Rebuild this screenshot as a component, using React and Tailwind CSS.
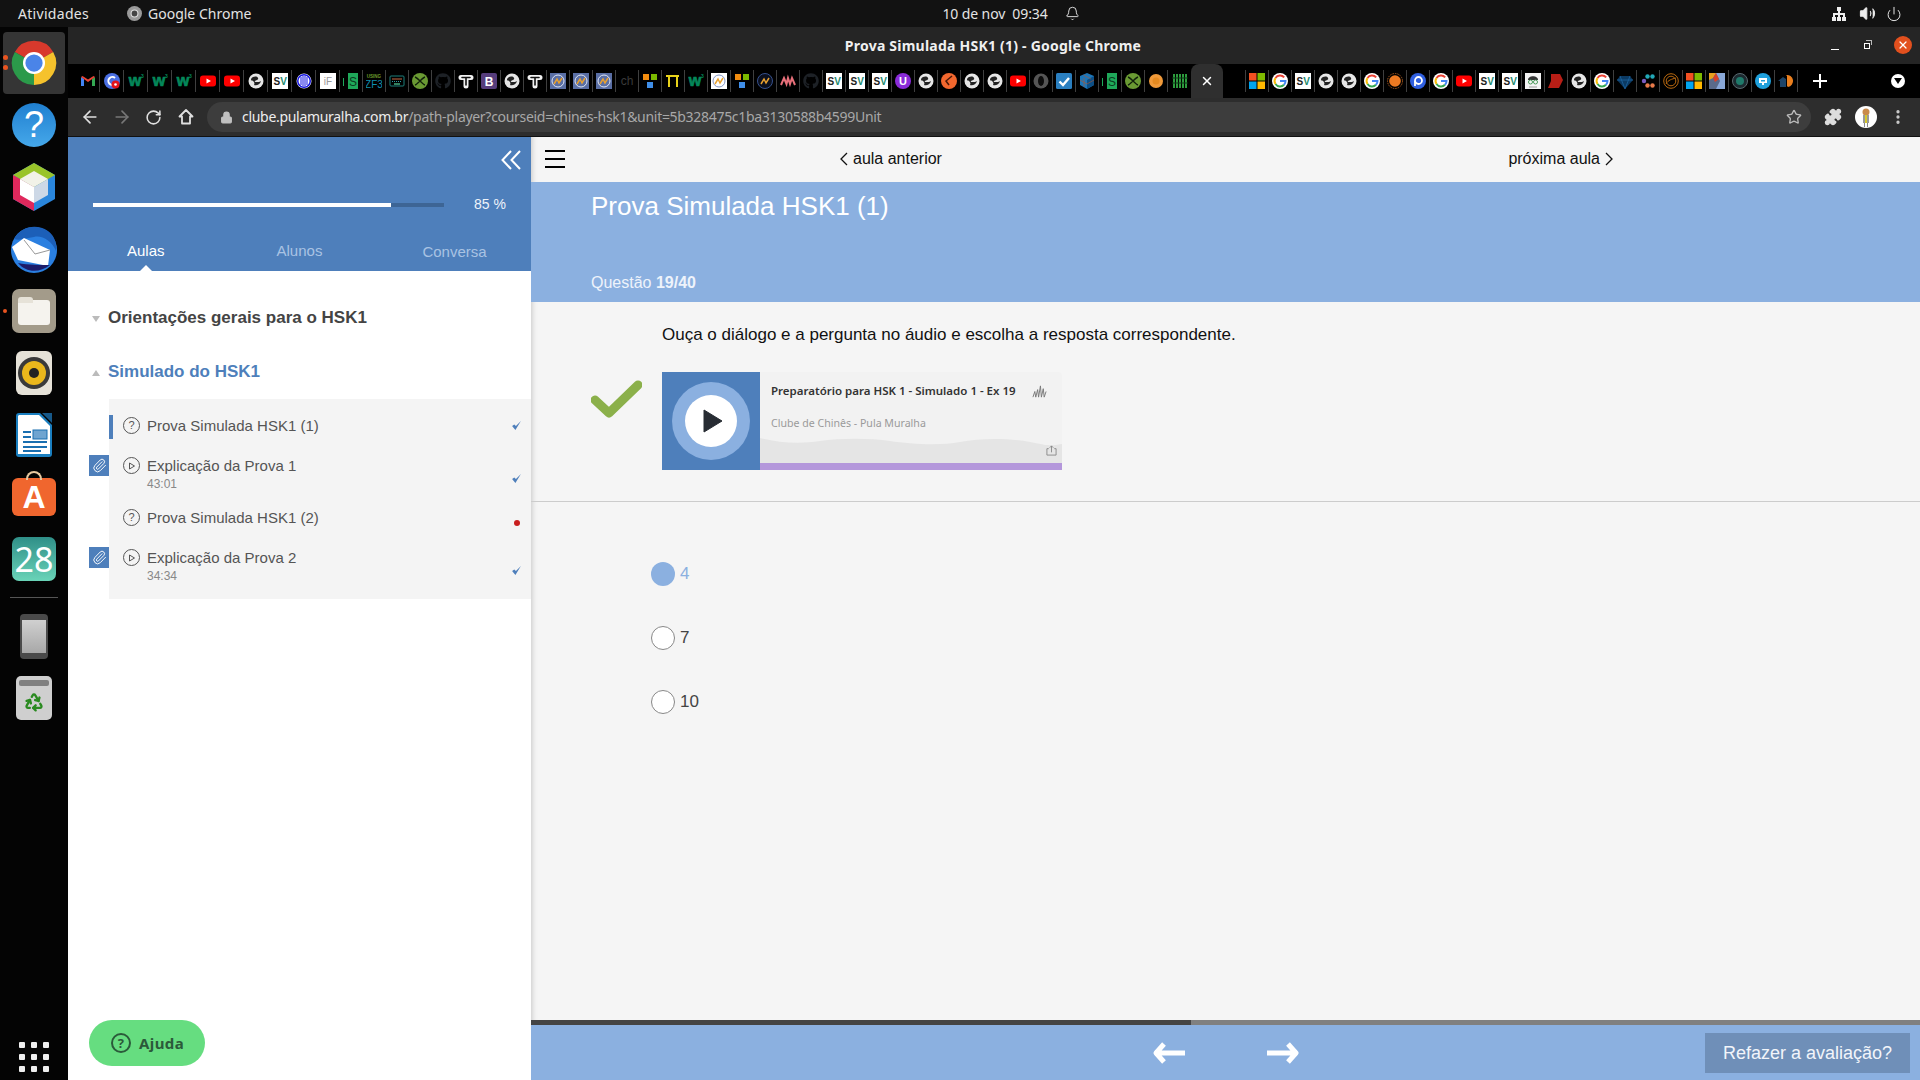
import React from 'react';
import { ArrowLeft, ArrowRight, Bell, Lock, MoreVertical, Paperclip, Power, Puzzle, Recycle, RotateCw, Star, Volume2, X } from 'lucide-react';
import { FaGithub } from 'react-icons/fa';

const Box = ({ children }) => (
  <svg viewBox="0 0 16 16" className="h-4 w-4 block">{children}</svg>
);

const Label = ({ x = 8, y = 12, size = 10, fill = '#fff', weight = 700, bold, children }) => (
  <text x={x} y={y} fontSize={size} fill={fill} fontWeight={weight} textAnchor="middle" fontFamily="Liberation Sans, sans-serif" stroke={bold ? fill : 'none'} strokeWidth={bold ? 0.7 : 0}>{children}</text>
);

const mathIcon = (bg, ring) => (
  <Box>
    <rect width="16" height="16" fill={bg} />
    <circle cx="8" cy="8" r="6" fill="none" stroke={ring} strokeWidth="1" />
    <path d="M4 11 7 6l2 4 3-5" fill="none" stroke="#e9a12f" strokeWidth="1.5" />
  </Box>
);

const icons = {
  gmail: <Box><path d="M1 13V4l3 2v7z" fill="#4285f4" /><path d="M15 13V4l-3 2v7z" fill="#34a853" /><path d="M1 4l7 5 7-5-1.500-1L8 6.500 2.500 3z" fill="#ea4335" /></Box>,
  podcast: <Box><circle cx="8" cy="8" r="8" fill="#4a6fe3" /><path d="M11 5a4 4 0 1 0 0 6" fill="none" stroke="#fff" strokeWidth="2" /><circle cx="11.500" cy="11.500" r="4" fill="#e3121b" /><circle cx="11.500" cy="11.500" r="1.300" fill="#fff" /></Box>,
  w3: <Box><Label x={7} y={12.500} size={16} fill="#04885a" bold>w</Label><Label x={14.500} y={5} size={5} fill="#04885a">3</Label></Box>,
  yt: <Box><rect y="2.500" width="16" height="11" rx="3" fill="#f00" /><path d="M6.500 5.500 11 8l-4.500 2.500z" fill="#fff" /></Box>,
  globe: <Box><circle cx="8" cy="8" r="7.500" fill="#e6e6e6" /><path d="M3 6c2-3 6-3 7-1 1 2-2 2-3 3s1 1 2 1 3 0 4-1c-1 4-5 5-7 4 1-2 0-3-1-4S3 8 3 6z" fill="#222" /></Box>,
  sv: <Box><rect width="16" height="16" fill="#fff" /><Label x={4.800} y={11.500} size={10} fill="#222">S</Label><Label x={11.500} y={11.500} size={10} fill="#1c8a6e">V</Label></Box>,
  stripe: <Box><circle cx="8" cy="8" r="7.500" fill="#fff" /><circle cx="8" cy="8" r="7" fill="#1414e0" /><circle cx="8" cy="8" r="5.500" fill="#fff" /><path d="M4.500 4h1v8h-1zM6.500 3h1v10h-1zM8.500 3h1v10h-1zM10.500 4h1v8h-1z" fill="#1414e0" /></Box>,
  iF: <Box><rect width="16" height="16" fill="#fff" /><Label y={12} size={10} fill="#999" weight={400}>iF</Label></Box>,
  is: <Box><rect x="0" y="5" width="1" height="8" fill="#1fa85a" /><rect x="5" y="0" width="10" height="16" fill="#1fa85a" /><Label x={10} y={12.500} size={12} fill="#0b3b20" weight={400}>S</Label></Box>,
  zf3: <Box><Label y={4.500} size={4.500} fill="#6b9a2a">USING</Label><Label y={15} size={10} fill="#0f8fb0" weight={400}>ZF3</Label></Box>,
  keys: <Box><rect x="1" y="3" width="14" height="10" rx="1" fill="none" stroke="#1d7f7a" /><path d="M3 6h10" stroke="#c96a44" /><path d="M3 8.500h10" stroke="#2b9aa0" strokeDasharray="1 1" /><path d="M5 11h6" stroke="#6fb" /></Box>,
  greenx: <Box><circle cx="8" cy="8" r="8" fill="#6a9a33" /><path d="M3 4c3 1 7 7 10 8M13 4c-3 1-7 7-10 8" stroke="#10200a" strokeWidth="1.400" fill="none" /></Box>,
  gh: <FaGithub className="h-4 w-4 block text-[#1d2126]" />,
  t: <Box><path d="M3 4.500h10M8 4.500V13" stroke="#f2f2f2" strokeWidth="5" strokeLinecap="round" /><path d="M4 4.500h8M8 4.500V12" stroke="#111" strokeWidth="1.600" strokeLinecap="round" /></Box>,
  b: <Box><rect width="16" height="16" rx="2" fill="#563d7c" /><Label y={12.500} size={12}>B</Label></Box>,
  math: mathIcon('#5a6fa5', '#dfe6f5'),
  mathw: mathIcon('#fff', '#8294c4'),
  mathd: <Box><circle cx="8" cy="8" r="7.500" fill="#0a0f1e" stroke="#35508c" /><path d="M4 11 7 6l2 4 3-5" fill="none" stroke="#e9a12f" strokeWidth="1.500" /></Box>,
  ch: <Box><Label y={12} size={12} fill="#3a3a3a" weight={400}>ch</Label></Box>,
  blocks: <Box><rect x="1" y="1" width="6" height="6" fill="#f28c0f" /><rect x="9" y="1" width="6" height="6" fill="#7ab800" /><rect x="5" y="9" width="6" height="6" fill="#3f8ee8" /></Box>,
  pi: <Box><path d="M1 3h13M4 3v11M12 3v11" stroke="#e8d21a" strokeWidth="2" fill="none" /></Box>,
  pinkm: <Box><path d="M1 12 4 5l2.500 6L8 5l2 6 2-6 3 7" fill="none" stroke="#e8707a" strokeWidth="2" /></Box>,
  purple: <Box><circle cx="8" cy="8" r="8" fill="#8a2bd8" /><Label y={12} size={11} weight={700}>U</Label></Box>,
  orange: <Box><circle cx="8" cy="8" r="8" fill="#f2672e" /><path d="M11 3 5 8l3 4" fill="none" stroke="#4a1808" strokeWidth="1.500" /></Box>,
  json: <Box><circle cx="8" cy="8" r="7.500" fill="#555" /><ellipse cx="8" cy="8" rx="3" ry="5" fill="#0c0c0c" /></Box>,
  check: <Box><rect width="16" height="16" rx="1.500" fill="#2a7fc0" /><path d="M3.500 8.500 7 12l6-7" fill="none" stroke="#fff" strokeWidth="2.400" /></Box>,
  cube: <Box><path d="M8 0 15 3v9l-7 4-7-4V3z" fill="#1d76b8" /><path d="M8 7v9l7-4V3z" fill="#0d4f86" /><path d="M1 7l7 4 7-4M4.500 2 12 6M5 14V5" stroke="#b5562a" strokeWidth=".6" fill="none" /></Box>,
  coin: <Box><circle cx="8" cy="8" r="7" fill="#f09a3a" /><circle cx="8" cy="8" r="3.500" fill="#e58a20" /></Box>,
  bars: <Box><path d="M1 1h2v14H1zM4 1h2v14H4zM7 1h2v14H7zM10 1h2v14h-2zM13 1h2v14h-2z" fill="#2d9b3d" /><path d="M0 5h16M0 10h16" stroke="#0b3a14" /></Box>,
  ms: <Box><rect width="7.500" height="7.500" fill="#f25022" /><rect x="8.500" width="7.500" height="7.500" fill="#7fba00" /><rect y="8.500" width="7.500" height="7.500" fill="#00a4ef" /><rect x="8.500" y="8.500" width="7.500" height="7.500" fill="#ffb900" /></Box>,
  g: <Box><circle cx="8" cy="8" r="8" fill="#fff" /><path d="M12.200 4.400A5.500 5.500 0 0 0 3.500 5" fill="none" stroke="#ea4335" strokeWidth="2" /><path d="M3.500 5a5.500 5.500 0 0 0 0 6" fill="none" stroke="#fbbc05" strokeWidth="2" /><path d="M3.500 11a5.500 5.500 0 0 0 8.500.800" fill="none" stroke="#34a853" strokeWidth="2" /><path d="M12 11.800A5.500 5.500 0 0 0 13.500 8H8" fill="none" stroke="#4285f4" strokeWidth="2" /></Box>,
  sun: <Box><circle cx="8" cy="8" r="7.500" fill="none" stroke="#a85a20" strokeDasharray="1.500 1" /><circle cx="8" cy="8" r="5.800" fill="#ee7a22" /></Box>,
  bluep: <Box><circle cx="8" cy="8" r="8" fill="#2f5fe0" /><circle cx="8.500" cy="7.500" r="3.500" fill="none" stroke="#fff" strokeWidth="1.800" /><path d="M5 8v5" stroke="#fff" strokeWidth="1.800" /></Box>,
  face: <Box><rect width="16" height="16" fill="#f4f4f4" /><path d="M3 7c0-5 10-5 10 0z" fill="#333" /><circle cx="5.500" cy="9" r="2" fill="none" stroke="#4a9a5a" /><circle cx="10.500" cy="9" r="2" fill="none" stroke="#4a9a5a" /><path d="M4 14h8" stroke="#9a9a9a" /></Box>,
  chevred: <Box><path d="M3 1h9l3 6-4 8H0l3-7z" fill="#b81e16" /></Box>,
  gem: <Box><path d="M3 3h10l3 4-8 9-8-9z" fill="#0b3a63" /><path d="M3 3l5 13 5-13M0 7h16" stroke="#1f6aa8" strokeWidth=".7" fill="none" /></Box>,
  dots: <Box><circle cx="4" cy="8" r="2.200" fill="#7a5cc0" /><circle cx="7.500" cy="3.500" r="2.200" fill="#22a8b8" /><circle cx="12.500" cy="3.500" r="2.200" fill="#22a8b8" /><circle cx="7.500" cy="12.500" r="2.200" fill="#e87a4a" /><circle cx="12.500" cy="12.500" r="2.200" fill="#e87a4a" /></Box>,
  ring: <Box><circle cx="8" cy="8" r="7.300" fill="none" stroke="#b8680f" /><circle cx="8" cy="8" r="4.800" fill="none" stroke="#b8680f" /><path d="M3 11c2-4 6-5 10-6" stroke="#b8680f" fill="none" /></Box>,
  colors: <Box><rect width="16" height="16" fill="#8aa8d8" /><path d="M0 0h7l4 8-4 8H0z" fill="#5a6a8a" /><path d="M0 0h7l-3 5-4 2z" fill="#e8a020" /><path d="M4 5l3-5 3 6-4 3z" fill="#d8402a" /></Box>,
  teal: <Box><circle cx="8" cy="8" r="7.500" fill="#1c2a30" stroke="#5a6a70" /><circle cx="8" cy="8" r="4" fill="#1f7a6a" /></Box>,
  gt: <Box><circle cx="8" cy="8" r="8" fill="#1fa0dc" /><path d="M4 5h8v5H9v2H7v-2H4z" fill="#fff" /><rect x="6" y="7" width="4" height="1.500" fill="#1fa0dc" /></Box>,
  house: <Box><path d="M0 8l5-4 3 2v8H2V8z" fill="#1d4468" /><path d="M8 2a6 6 0 0 1 2 12l-1-1V3z" fill="#ea7f1e" /></Box>,
};

const LEFT_TABS = ['gmail', 'podcast', 'w3', 'w3', 'w3', 'yt', 'yt', 'globe', 'sv', 'stripe', 'iF', 'is', 'zf3', 'keys', 'greenx', 'gh', 't', 'b', 'globe', 't', 'math', 'math', 'math', 'ch', 'blocks', 'pi', 'w3', 'mathw', 'blocks', 'mathd', 'pinkm', 'gh', 'sv', 'sv', 'sv', 'purple', 'globe', 'orange', 'globe', 'globe', 'yt', 'json', 'check', 'cube', 'is', 'greenx', 'coin', 'bars'];
const RIGHT_TABS = ['ms', 'g', 'sv', 'globe', 'globe', 'g', 'sun', 'bluep', 'g', 'yt', 'sv', 'sv', 'face', 'chevred', 'globe', 'g', 'gem', 'dots', 'ring', 'ms', 'colors', 'teal', 'gt', 'house'];

const Tab = ({ kind, wide, last }) => (
  <div className={`flex h-[22px] items-center justify-center ${wide ? 'w-[24px]' : 'w-[23px]'} ${last ? '' : 'border-r border-[#3f3f3f]'}`}>
    {icons[kind]}
  </div>
);

const TabStrip = () => (
  <div className="flex h-[34px] items-center bg-black pl-[8px]">
    {LEFT_TABS.map((k, i) => (
      <Tab key={i} kind={k} wide={i < 11} last={i === LEFT_TABS.length - 1} />
    ))}
    <div className="flex h-full w-[32px] items-center justify-center self-end rounded-t-[8px] bg-[#2f2f2f]">
      <X className="h-[14px] w-[14px] text-white" strokeWidth={2.5} />
    </div>
    <div className="h-[22px] w-[23px] border-r border-[#3f3f3f]" />
    {RIGHT_TABS.map((k, i) => (
      <Tab key={i} kind={k} />
    ))}
    <svg viewBox="0 0 14 14" className="ml-[15px] h-[14px] w-[14px]">
      <path d="M6 0h2v6h6v2H8v6H6V8H0V6h6z" fill="#fff" />
    </svg>
    <div className="ml-[64px] flex h-[14px] w-[14px] items-center justify-center rounded-full bg-white">
      <div className="h-0 w-0 border-x-[4px] border-t-[6px] border-x-transparent border-t-black" />
    </div>
  </div>
);

const TopBar = () => (
  <div className="flex h-[27px] items-center bg-[#121212] text-[14px] text-[#e4e4e4] font-['Noto_Sans',sans-serif]">
    <span className="ml-[18px] tracking-[0.3px]">Atividades</span>
    <svg viewBox="0 0 14 14" className="ml-[38px] h-[15px] w-[15px]">
      <circle cx="7" cy="7" r="7" fill="#9a9a9a" />
      <circle cx="7" cy="7" r="3.200" fill="#444" stroke="#ddd" />
    </svg>
    <span className="ml-[6px]">Google Chrome</span>
    <span className="ml-[691px] tracking-[-0.1px]">10 de nov&nbsp; 09:34</span>
    <Bell className="ml-[17px] h-[15px] w-[15px]" strokeWidth={1.5} />
    <svg viewBox="0 0 16 16" className="ml-[751px] h-[16px] w-[16px]">
      <path d="M6 1h4v4H9v2h5v4h1v4h-4v-4h1V9H9v2h1v4H6v-4h1V9H4v2h1v4H1v-4h1V7h5V5H6z" fill="#eee" />
    </svg>
    <Volume2 className="ml-[12px] h-[17px] w-[17px] fill-[#eee]" strokeWidth={1.5} />
    <Power className="ml-[10px] h-[16px] w-[16px]" strokeWidth={1.5} />
  </div>
);

const TitleBar = () => (
  <div className="relative flex h-[37px] items-center justify-center bg-[#252525]">
    <span className="ml-[-2px] text-[14px] font-bold text-[#f0f0f0] font-['Noto_Sans',sans-serif] tracking-[0.23px]">Prova Simulada HSK1 (1) - Google Chrome</span>
    <div className="absolute right-[8px] top-[9px] flex items-center">
      <div className="mt-[8px] h-[1px] w-[8px] bg-white" />
      <div className="relative ml-[25px] mt-[2px] h-[6px] w-[6px] border border-white">
        <div className="absolute left-[1px] top-[-4px] h-[5px] w-[6px] border-r border-t border-[#bbb]" />
      </div>
      <div className="ml-[24px] flex h-[18px] w-[18px] items-center justify-center rounded-full bg-[#e2501e]">
        <X className="h-[12px] w-[12px] text-white" strokeWidth={2.5} />
      </div>
    </div>
  </div>
);

const Toolbar = () => (
  <div className="flex h-[38px] items-center bg-[#2d2d2d] text-[#e0e0e0]">
    <ArrowLeft className="ml-[12px] h-[20px] w-[20px]" strokeWidth={2} />
    <ArrowRight className="ml-[12px] h-[20px] w-[20px] text-[#777]" strokeWidth={2} />
    <RotateCw className="ml-[13px] h-[17px] w-[17px]" strokeWidth={2.2} />
    <svg viewBox="0 0 20 20" className="ml-[14px] h-[20px] w-[20px]">
      <path d="M10 3 3.500 9.500H6V16.500h8V9.500h2.500z" fill="none" stroke="#e0e0e0" strokeWidth="1.800" strokeLinejoin="round" />
    </svg>
    <div className="ml-[11px] flex h-[30px] w-[1604px] items-center rounded-full bg-[#3d3d3d]">
      <Lock className="ml-[13px] h-[13px] w-[13px] fill-[#c0c0c0] text-[#c0c0c0]" />
      <span className="ml-[9px] mt-[-1px] whitespace-nowrap text-[14px] tracking-[-0.3px] font-['Noto_Sans',sans-serif] text-[#a8a8a8]">
        <span className="text-[#eee]">clube.pulamuralha.com.br</span>/path-player?courseid=chines-hsk1&amp;unit=5b328475c1ba3130588b4599Unit
      </span>
      <Star className="ml-auto mr-[9px] h-[16px] w-[16px] text-[#bbb]" strokeWidth={2} />
    </div>
    <Puzzle className="ml-[13px] h-[18px] w-[18px] fill-[#ddd] text-[#ddd]" />
    <svg viewBox="0 0 22 22" className="ml-[13px] h-[22px] w-[22px]">
      <circle cx="11" cy="11" r="11" fill="#fff" />
      <circle cx="11" cy="6" r="3.500" fill="#c98a4a" />
      <rect x="8" y="9" width="6" height="8" fill="#999" />
      <rect x="10" y="9" width="2" height="8" fill="#d8c82a" />
      <path d="M9 17h1v4H9zM12 17h1v4h-1z" fill="#888" />
    </svg>
    <MoreVertical className="ml-[12px] h-[18px] w-[18px] text-[#ccc]" strokeWidth={2.4} />
  </div>
);

const dockIcons = [
  <svg viewBox="0 0 48 48" className="h-[46px] w-[46px]">
    <path d="M24 24 4 12.500A23 23 0 0 1 44 12.500z" fill="#d8392c" />
    <path d="M24 24 44 12.500A23 23 0 0 1 24 47z" fill="#f5c22c" />
    <path d="M24 24 24 47A23 23 0 0 1 4 12.500z" fill="#2b9a4a" />
    <circle cx="24" cy="24" r="11.500" fill="#fff" />
    <circle cx="24" cy="24" r="9" fill="#4a84e8" />
  </svg>,
  <div className="flex h-[44px] w-[44px] items-center justify-center rounded-full bg-gradient-to-b from-[#1f7fd0] to-[#45a8ea] text-[36px] leading-none text-white font-['Liberation_Sans',sans-serif]">?</div>,
  <svg viewBox="0 0 42 48" className="h-[48px] w-[42px]">
    <path d="M21 0 42 12v24L21 48 0 36V12z" fill="#2a86dc" />
    <path d="M21 0 42 12 21 24 0 12z" fill="#9ac42a" />
    <path d="M0 12 21 24v24L0 36z" fill="#e0285c" />
    <path d="M21 8 35 16 21 24 7 16z" fill="#f2f2e8" />
    <path d="M7 16 21 24V40L7 32z" fill="#fff" />
    <path d="M35 16 21 24V40L35 32z" fill="#cdd8e6" />
  </svg>,
  <svg viewBox="0 0 48 48" className="h-[48px] w-[48px]">
    <circle cx="24" cy="25" r="23" fill="#2a7fe0" />
    <path d="M4 14C10 2 26-2 38 6c6 4 9 12 8 20-4-10-14-16-22-14-8 1-14 4-20 2z" fill="#1c5fb8" />
    <path d="M2 22 14 13l26 12-2 16-30-6z" fill="#fff" />
    <path d="M14 15 25 29l15-4" fill="none" stroke="#999" />
    <path d="M8 38c8 10 22 10 32 2-8 0-22 0-32-2z" fill="#1c1c6a" />
  </svg>,
  <div className="flex h-[44px] w-[44px] items-end justify-center rounded-[7px] bg-[#a39b8a] pb-[8px]">
    <div className="relative h-[25px] w-[32px] rounded-[3px] bg-[#f5f3ee]">
      <div className="absolute left-0 top-[-3px] h-[6px] w-[15px] rounded-t-[3px] bg-[#e6e2d8]" />
    </div>
  </div>,
  <div className="flex h-[44px] w-[36px] items-center justify-center rounded-[6px] bg-[#e6e2d8]">
    <div className="flex h-[32px] w-[32px] items-center justify-center rounded-full bg-[#3a3a3a]">
      <div className="flex h-[24px] w-[24px] items-center justify-center rounded-full bg-[#eab71c]">
        <div className="h-[10px] w-[10px] rounded-full bg-[#222]" />
      </div>
    </div>
  </div>,
  <svg viewBox="0 0 36 44" className="h-[44px] w-[36px]">
    <path d="M3 0h21l12 12v29a3 3 0 0 1-3 3H3a3 3 0 0 1-3-3V3a3 3 0 0 1 3-3z" fill="#1a7fc0" />
    <path d="M3 2h20l11 11v28H2V3z" fill="#fff" />
    <path d="M26 0h10v10z" fill="#17598a" />
    <path d="M7 18h8v2H7zM7 23h8v2H7zM7 28h24v2H7zM7 33h24v2H7zM7 37h18v2H7z" fill="#1a6fb0" />
    <rect x="17" y="17" width="14" height="9" fill="#6fa4d0" stroke="#1a6fb0" />
  </svg>,
  <div className="relative flex h-[38px] w-[44px] items-center justify-center rounded-[6px] bg-[#f0662e] text-[32px] font-bold leading-none text-white font-['Liberation_Sans',sans-serif]">
    <div className="absolute left-[14px] top-[-7px] h-[9px] w-[16px] rounded-t-full border-2 border-b-0 border-[#e8c9a0]" />
    A
  </div>,
  <div className="flex h-[44px] w-[44px] items-center justify-center rounded-[7px] bg-gradient-to-b from-[#2f8f88] to-[#6ad4b8] text-[34px] leading-none text-white font-['Noto_Sans',sans-serif]">28</div>,
];

const Dock = () => (
  <div className="flex h-[1053px] w-[68px] shrink-0 flex-col items-center bg-[#040404] pt-[5px]">
    {dockIcons.map((icon, i) => (
      <div key={i} className={`relative flex h-[62px] w-[62px] items-center justify-center rounded-[4px] ${i === 0 ? 'bg-[#353535]' : ''}`}>
        {icon}
        {i === 0 && <div className="absolute left-[0px] top-[23px] h-[5px] w-[5px] rounded-full bg-[#e95420]" />}
        {i === 0 && <div className="absolute left-[0px] top-[33px] h-[5px] w-[5px] rounded-full bg-[#e95420]" />}
        {i === 4 && <div className="absolute left-[0px] top-[29px] h-[4px] w-[4px] rounded-full bg-[#e95420]" />}
      </div>
    ))}
    <div className="mt-[7px] h-[1px] w-[48px] bg-[#555]" />
    <div className="mt-[7px] flex h-[62px] items-center justify-center">
      <div className="flex h-[45px] w-[28px] flex-col rounded-[4px] bg-[#4a4a4a] px-[2px] py-[6px]">
        <div className="flex-1 bg-gradient-to-b from-[#d0d0d0] to-[#a8a8a8]" />
      </div>
    </div>
    <div className="flex h-[62px] items-center justify-center">
      <div className="flex h-[44px] w-[36px] flex-col items-center rounded-[5px] bg-[#cfcfcf] pt-[4px]">
        <div className="h-[6px] w-[30px] rounded-[2px] bg-[#808080]" />
        <Recycle className="mt-[6px] h-[20px] w-[20px] text-[#2a8a20]" strokeWidth={2.8} />
      </div>
    </div>
    <div className="mb-[8px] mt-auto grid grid-cols-3 gap-[6px]">
      {[0, 1, 2, 3, 4, 5, 6, 7, 8].map((i) => (
        <div key={i} className="h-[6px] w-[6px] rounded-[1px] bg-[#eee]" />
      ))}
    </div>
  </div>
);

const QuestionIcon = ({ play }) => (
  <div className="flex h-[17px] w-[17px] shrink-0 items-center justify-center rounded-full border border-[#555] text-[11px] leading-none text-[#555]">
    {play ? (
      <svg viewBox="0 0 8 8" className="ml-[1px] h-[8px] w-[8px]">
        <path d="M1.500 1 6.500 4l-5 3z" fill="none" stroke="#555" />
      </svg>
    ) : '?'}
  </div>
);

const Tick = ({ className }) => (
  <svg viewBox="0 0 10 10" className={`h-[11px] w-[11px] ${className}`}>
    <path d="M1 5.500 4 9l5-8-4.500 4.500L3 4z" fill="#4e7fbb" />
  </svg>
);

const lessons = [
  { title: 'Prova Simulada HSK1 (1)', height: 'h-[40px]', status: 'done', current: true },
  { title: 'Explicação da Prova 1', time: '43:01', height: 'h-[52px]', status: 'done', clip: true },
  { title: 'Prova Simulada HSK1 (2)', height: 'h-[40px]', status: 'open' },
  { title: 'Explicação da Prova 2', time: '34:34', height: 'h-[52px]', status: 'done', clip: true },
];

const Lesson = ({ item }) => (
  <div className={`relative flex ${item.height} pl-[14px] pr-[9px]`}>
    {item.current && <div className="absolute left-0 top-[-1px] h-[24px] w-[4px] bg-[#4e7fbb]" />}
    {item.clip && (
      <div className="absolute left-[-20px] top-[-1px] flex h-[21px] w-[20px] items-center justify-center bg-[#4e7fbb]">
        <Paperclip className="h-[15px] w-[15px] text-white" strokeWidth={1.5} />
      </div>
    )}
    <div className="mt-[1px]">
      <QuestionIcon play={!!item.clip} />
    </div>
    <div className="ml-[7px]">
      <div className="text-[15px] leading-[20px] text-[#555]">{item.title}</div>
      {item.time && <div className="mt-[1px] text-[12px] leading-[14px] text-[#888]">{item.time}</div>}
    </div>
    {item.status === 'done' ? (
      <Tick className={`ml-auto ${item.time ? 'mt-[17px]' : 'mt-[4px]'}`} />
    ) : (
      <div className="ml-auto mr-[2px] mt-[12px] h-[6px] w-[6px] rounded-full bg-[#c81e1e]" />
    )}
  </div>
);

const Sidebar = () => (
  <div className="relative z-10 flex w-[463px] shrink-0 flex-col bg-white font-['Liberation_Sans',sans-serif]">
    <div className="h-[134px] bg-[#4e7fbb] pt-[13px]">
      <div className="flex justify-end pr-[10px]">
        <svg viewBox="0 0 20 20" className="h-[20px] w-[20px]">
          <path d="M10 1 1.500 10l8.500 9M19 1l-8.500 9 8.500 9" fill="none" stroke="#fff" strokeWidth="2" />
        </svg>
      </div>
      <div className="mt-[24px] flex items-center pl-[25px]">
        <div className="h-[4px] w-[351px] bg-[#3d6595]">
          <div className="h-full w-[85%] bg-white" />
        </div>
        <span className="ml-[30px] text-[14px] text-[#eef3fa]">85 %</span>
      </div>
      <div className="mt-[25px] flex text-[15px] text-[#a9c3e3]">
        <div className="relative ml-[59px] text-white">
          Aulas
          <div className="absolute left-[12px] top-[25px] h-0 w-0 border-x-[7px] border-b-[7px] border-x-transparent border-b-white" />
        </div>
        <div className="ml-[112px]">Alunos</div>
        <div className="ml-[100px] mt-[1px]">Conversa</div>
      </div>
    </div>
    <div className="mt-[34px] flex items-center pl-[24px] text-[17px] font-bold text-[#444]">
      <div className="mt-[3px] h-0 w-0 border-x-[4px] border-t-[6px] border-x-transparent border-t-[#bbb]" />
      <span className="ml-[8px]">Orientações gerais para o HSK1</span>
    </div>
    <div className="mt-[28px] flex items-center pl-[24px] text-[17px] font-bold text-[#4e7fbb]">
      <div className="mt-[3px] h-0 w-0 border-x-[4px] border-b-[6px] border-x-transparent border-b-[#bbb]" />
      <span className="ml-[8px]">Simulado do HSK1</span>
    </div>
    <div className="ml-[41px] mt-[15px] h-[200px] bg-[#f4f4f4] pt-[17px]">
      {lessons.map((item) => (
        <Lesson key={item.title} item={item} />
      ))}
    </div>
    <div className="mb-[14px] ml-[21px] mt-auto flex h-[46px] w-[116px] items-center rounded-full bg-[#66dd80] pl-[22px] text-[15px] font-bold tracking-[0.4px] text-[#2b5a3a] font-['Noto_Sans',sans-serif]">
      <div className="flex h-[20px] w-[20px] items-center justify-center rounded-full border-2 border-[#2b5a3a] text-[13px] leading-none">?</div>
      <span className="ml-[8px]">Ajuda</span>
    </div>
  </div>
);

const Player = () => (
  <div className="flex h-[98px] w-[400px] overflow-hidden rounded-tr-[4px] font-['Noto_Sans',sans-serif]">
    <div className="flex w-[98px] shrink-0 items-center justify-center bg-[#4e7fbb]">
      <div className="flex h-[78px] w-[78px] items-center justify-center rounded-full bg-[#8bb0e0]">
        <div className="flex h-[52px] w-[52px] items-center justify-center rounded-full bg-white">
          <svg viewBox="0 0 20 24" className="ml-[3px] h-[24px] w-[20px]">
            <path d="M1 1 19 12 1 23z" fill="#272c33" stroke="#272c33" strokeLinejoin="round" />
          </svg>
        </div>
      </div>
    </div>
    <div className="relative flex-1 bg-[#f2f2f2]">
      <svg viewBox="0 0 302 26" preserveAspectRatio="none" className="absolute bottom-[7px] left-0 h-[26px] w-full">
        <path d="M0 1C20 6 40 7 60 4s50-3 70 0 50 5 70 1 50-4 70 0 20 4 32 2V26H0z" fill="#e5e5e5" />
      </svg>
      <div className="absolute bottom-0 left-0 h-[7px] w-full bg-[#b497db]" />
      <div className="relative ml-[11px] mt-[11px] flex items-center">
        <span className="whitespace-nowrap text-[11.500px] font-semibold leading-[16px] text-[#333]">Preparatório para HSK 1 - Simulado 1 - Ex 19</span>
        <svg viewBox="0 0 16 16" className="absolute left-[261px] top-0 h-[17px] w-[15px]">
          <path d="M1 14 3 8l1 6 2-8 1 8 2-12 1 12 2-9 1 9 2-6" fill="none" stroke="#777" />
        </svg>
      </div>
      <div className="relative ml-[11px] mt-[16px] text-[10.600px] leading-[16px] text-[#9a9a9a]">Clube de Chinês - Pula Muralha</div>
      <svg viewBox="0 0 12 12" className="absolute bottom-[14px] right-[5px] h-[11px] w-[11px]">
        <path d="M3 4H1v7h10V4H9M6 8V1M4 3l2-2 2 2" fill="none" stroke="#888" />
      </svg>
    </div>
  </div>
);

const options = [
  { label: '4', selected: true },
  { label: '7' },
  { label: '10' },
];

const Main = () => (
  <div className="flex min-w-0 flex-1 flex-col bg-[#f5f5f5] font-['Liberation_Sans',sans-serif] shadow-[inset_6px_0_6px_-6px_rgba(0,0,0,0.25)]">
    <div className="flex h-[45px] items-center pb-[1px] text-[16px] text-[#111]">
      <div className="ml-[14px] flex w-[20px] flex-col gap-[6px]">
        <div className="h-[2px] bg-black" />
        <div className="h-[2px] bg-black" />
        <div className="h-[2px] bg-black" />
      </div>
      <div className="ml-[275px] flex items-center">
        <svg viewBox="0 0 8 14" className="h-[14px] w-[8px]">
          <path d="M7 1 1 7l6 6" fill="none" stroke="#111" strokeWidth="1.300" />
        </svg>
        <span className="ml-[5px]">aula anterior</span>
      </div>
      <div className="ml-auto mr-[307px] flex items-center">
        <span className="mr-[5px]">próxima aula</span>
        <svg viewBox="0 0 8 14" className="h-[14px] w-[8px]">
          <path d="M1 1l6 6-6 6" fill="none" stroke="#111" strokeWidth="1.300" />
        </svg>
      </div>
    </div>
    <div className="flex h-[120px] flex-col bg-[#8bb0e0] pl-[60px] text-white">
      <div className="mt-[9px] text-[26px] leading-[30px]">Prova Simulada HSK1 (1)</div>
      <div className="mt-auto mb-[10px] text-[16px] leading-[18px] text-[#eef3fb]">
        Questão <b>19/40</b>
      </div>
    </div>
    <div className="h-[200px] border-b border-[#ccc]">
      <div className="ml-[131px] mt-[23px] text-[17px] leading-[20px] text-[#111]">
        Ouça o diálogo e a pergunta no áudio e escolha a resposta correspondente.
      </div>
      <div className="mt-[27px] flex">
        <svg viewBox="0 0 51 38" className="ml-[60px] mt-[8px] h-[38px] w-[51px]">
          <path d="M4 20 18 33 47 5" fill="none" stroke="#8bb04a" strokeWidth="9" strokeLinecap="round" strokeLinejoin="round" />
        </svg>
        <div className="ml-[20px]">
          <Player />
        </div>
      </div>
    </div>
    <div className="ml-[120px] mt-[60px] flex flex-col gap-[40px] text-[17px] text-[#444]">
      {options.map((o) => (
        <div key={o.label} className="flex h-[24px] items-center">
          <div className={`h-[24px] w-[24px] rounded-full ${o.selected ? 'bg-[#8bb0e0]' : 'border border-[#888] bg-white'}`} />
          <span className={`ml-[5px] ${o.selected ? 'text-[#8bb0e0]' : ''}`}>{o.label}</span>
        </div>
      ))}
    </div>
    <div className="mt-auto h-[5px] bg-[#808080]">
      <div className="h-full w-[47.5%] bg-[#444]" />
    </div>
    <div className="flex h-[55px] items-center bg-[#8bb0e0]">
      <svg viewBox="0 0 34 22" className="ml-[621px] h-[22px] w-[34px]">
        <path d="M33 11H4M12 2 4 11l8 9" fill="none" stroke="#fff" strokeWidth="5" strokeLinejoin="round" />
      </svg>
      <svg viewBox="0 0 34 22" className="ml-[80px] h-[22px] w-[34px]">
        <path d="M1 11H30M22 2l8 9-8 9" fill="none" stroke="#fff" strokeWidth="5" strokeLinejoin="round" />
      </svg>
      <div className="ml-auto mr-[10px] flex h-[40px] w-[205px] items-center justify-center bg-[#6f8fb8] pt-[2px] text-[18px] text-[#f2f5fa]">
        Refazer a avaliação?
      </div>
    </div>
  </div>
);

const App = () => (
  <div className="h-[1080px] w-[1920px] overflow-hidden bg-black">
    <TopBar />
    <div className="flex">
      <Dock />
      <div className="flex min-w-0 flex-1 flex-col">
        <TitleBar />
        <TabStrip />
        <Toolbar />
        <div className="h-[1px] bg-[#111]" />
        <div className="flex h-[943px]">
          <Sidebar />
          <Main />
        </div>
      </div>
    </div>
  </div>
);

export default App;
